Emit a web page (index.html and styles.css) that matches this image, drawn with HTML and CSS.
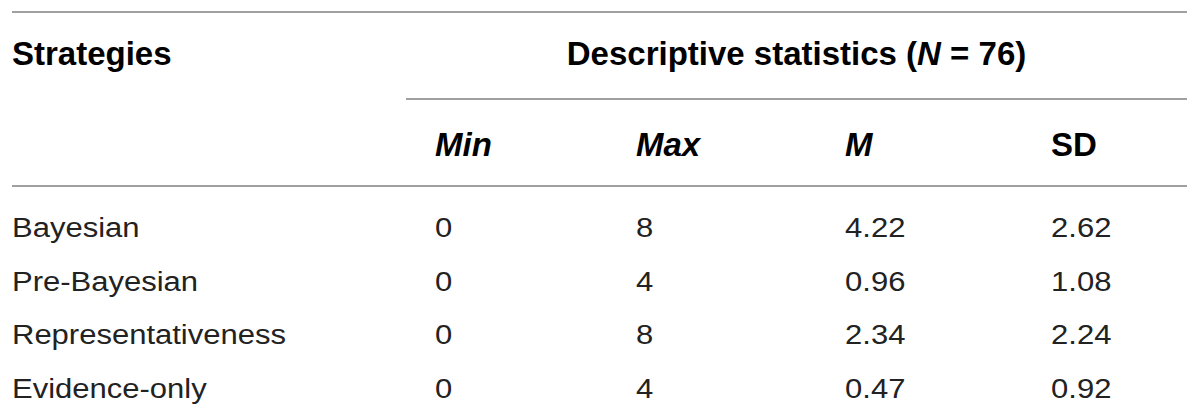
FILE: index.html
```html
<!DOCTYPE html>
<html lang="en">
<head>
<meta charset="utf-8">
<title>Descriptive statistics</title>
<link rel="stylesheet" href="styles.css">
</head>
<body>
<table class="stats">
  <colgroup>
    <col class="c-name">
    <col class="c-min">
    <col class="c-max">
    <col class="c-m">
    <col class="c-sd">
  </colgroup>
  <thead>
    <tr class="head-top">
      <th class="name">Strategies</th>
      <th class="group" colspan="4">Descriptive statistics (<i>N</i> = 76)</th>
    </tr>
    <tr class="head-sub">
      <th class="name"></th>
      <th class="num"><i>Min</i></th>
      <th class="num"><i>Max</i></th>
      <th class="num"><i>M</i></th>
      <th class="num">SD</th>
    </tr>
  </thead>
  <tbody>
    <tr class="first">
      <td class="name">Bayesian</td>
      <td class="num">0</td>
      <td class="num">8</td>
      <td class="num">4.22</td>
      <td class="num">2.62</td>
    </tr>
    <tr>
      <td class="name">Pre-Bayesian</td>
      <td class="num">0</td>
      <td class="num">4</td>
      <td class="num">0.96</td>
      <td class="num">1.08</td>
    </tr>
    <tr>
      <td class="name">Representativeness</td>
      <td class="num">0</td>
      <td class="num">8</td>
      <td class="num">2.34</td>
      <td class="num">2.24</td>
    </tr>
    <tr>
      <td class="name">Evidence-only</td>
      <td class="num">0</td>
      <td class="num">4</td>
      <td class="num">0.47</td>
      <td class="num">0.92</td>
    </tr>
  </tbody>
</table>
</body>
</html>
```

FILE: styles.css
```css
html, body {
  margin: 0;
  padding: 0;
  background: #ffffff;
}

.stats {
  margin: 11px 0 0 12px;
  width: 1175px;
  table-layout: fixed;
  border-collapse: separate;
  border-spacing: 0;
  border-top: 2px solid #a0a0a0;
  font-family: "Liberation Sans", Arial, Helvetica, sans-serif;
  color: #000;
}

.c-name { width: 394px; }
.c-min { width: 201px; }
.c-max { width: 209px; }
.c-m { width: 206px; }
.c-sd { width: 165px; }

.stats th,
.stats td {
  padding: 0;
  text-align: left;
  vertical-align: top;
  white-space: nowrap;
}

.stats th {
  font-size: 33px;
  line-height: 38px;
  font-weight: 700;
}

.stats th i {
  font-style: italic;
}

.head-top th {
  padding-top: 21.6px;
  padding-bottom: 25.4px;
}

.head-top .group {
  text-align: center;
  border-bottom: 2px solid #a0a0a0;
}

.head-sub th {
  padding-top: 25.6px;
  padding-bottom: 21.4px;
  border-bottom: 2px solid #a0a0a0;
}

.stats th.num {
  padding-left: 29px;
}

/* body text: lighter, slightly wide face (Helvetica Neue Light look) */
.stats td {
  font-size: 27px;
  line-height: 53.7px;
  font-weight: 400;
  color: #222;
  transform: scaleX(1.148);
  transform-origin: 0 50%;
}

.stats td.num {
  padding-left: 25.3px;
}

.stats tr.first td {
  padding-top: 15.1px;
}
```
